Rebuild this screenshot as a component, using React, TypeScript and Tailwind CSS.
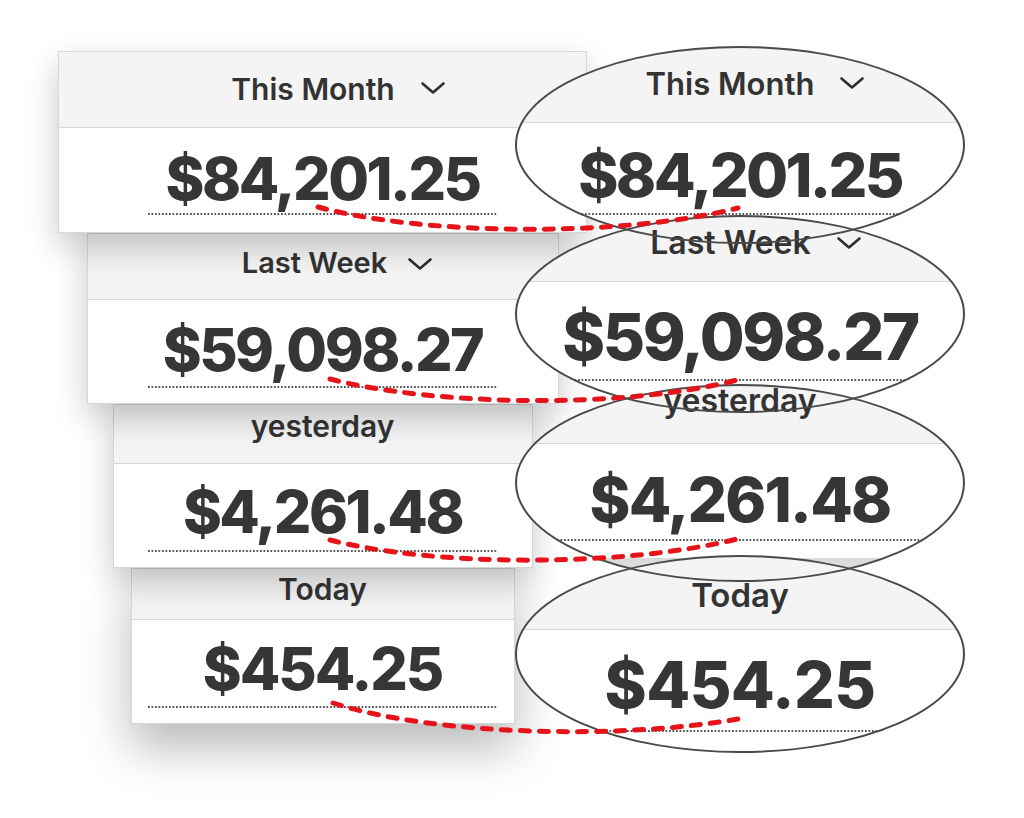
import React from "react";

function Chevron({ className = "" }: { className?: string }) {
  return (
    <svg className={className} width="26" height="14" viewBox="0 0 26 14" fill="none">
      <path d="M2.5 2.5L13 11.5L23.5 2.5" stroke="#2f2f2f" strokeWidth="2.6" strokeLinecap="round" strokeLinejoin="round" />
    </svg>
  );
}

function Dots({ className = "" }: { className?: string }) {
  return (
    <div
      className={`h-[2px] shrink-0 bg-[linear-gradient(90deg,#555_0_1.5px,transparent_1.5px)] bg-size-[3.5px_2px] ${className}`}
    />
  );
}

export default function App() {
  return (
    <div className="relative h-[818px] w-[1024px] overflow-hidden bg-white font-['Inter','Noto_Sans',sans-serif] text-[#333]">
      {/* left stacked cards */}
      <div className="ml-[58px] flex w-[529px] flex-col items-center pt-[51px]">
        {/* This Month */}
        <div className="relative z-40 flex h-[182px] w-[529px] flex-col border border-[#d6d6d6] bg-white shadow-[0_14px_30px_rgba(0,0,0,0.22)]">
          <div className="flex h-[76px] shrink-0 justify-center border-b border-[#d6d6d6] bg-[#f4f4f4] pt-[22px]">
            <div className="ml-[32px] flex items-start gap-[25px]">
              <span className="text-[30px] font-semibold leading-none">This Month</span>
              <Chevron className="mt-[7px]" />
            </div>
          </div>
          <div className="flex flex-col items-center pt-[21px]">
            <span className="text-[59px] font-extrabold leading-none tracking-[-2.5px] text-[#363636]">$84,201.25</span>
            <Dots className="mt-[5px] w-[349px]" />
          </div>
        </div>

        {/* Last Week */}
        <div className="relative z-30 flex h-[171px] w-[472px] flex-col border border-[#d6d6d6] bg-white shadow-[0_14px_30px_rgba(0,0,0,0.22)]">
          <div className="flex h-[66px] shrink-0 justify-center border-b border-[#d6d6d6] bg-[#f4f4f4] pt-[14px]">
            <div className="ml-[30px] flex items-start gap-[20px]">
              <span className="text-[29px] font-semibold leading-none">Last Week</span>
              <Chevron className="mt-[9px]" />
            </div>
          </div>
          <div className="flex flex-col items-center pt-[20px]">
            <span className="text-[59px] font-extrabold leading-none tracking-[-2.5px] text-[#363636]">$59,098.27</span>
            <Dots className="mt-[7px] w-[349px]" />
          </div>
        </div>

        {/* yesterday */}
        <div className="relative z-20 flex h-[164px] w-[420px] flex-col border border-[#d6d6d6] bg-white shadow-[0_14px_30px_rgba(0,0,0,0.22)]">
          <div className="flex h-[59px] shrink-0 justify-center border-b border-[#d6d6d6] bg-[#f4f4f4] pt-[6px]">
            <span className="text-[30px] font-semibold leading-none">yesterday</span>
          </div>
          <div className="flex flex-col items-center pt-[18px]">
            <span className="text-[59px] font-extrabold leading-none tracking-[-2.5px] text-[#363636]">$4,261.48</span>
            <Dots className="mt-[9px] w-[349px]" />
          </div>
        </div>

        {/* Today */}
        <div className="relative z-10 flex h-[156px] w-[384px] flex-col border border-[#d6d6d6] bg-white shadow-[0_24px_45px_rgba(0,0,0,0.28)]">
          <div className="flex h-[51px] shrink-0 justify-center border-b border-[#d6d6d6] bg-[#f4f4f4] pt-[5px]">
            <span className="text-[30px] font-semibold leading-none">Today</span>
          </div>
          <div className="flex flex-col items-center pt-[19px]">
            <span className="text-[59px] font-extrabold leading-none tracking-[-2px] text-[#363636]">$454.25</span>
            <Dots className="mt-[8px] w-[349px]" />
          </div>
        </div>
      </div>

      {/* magnifier lenses */}
      <div className="absolute left-[515px] top-[46px] z-50 flex h-[198px] w-[450px] flex-col overflow-hidden rounded-[50%] bg-white">
        <div className="flex h-[77px] shrink-0 justify-center border-b border-[#d6d6d6] bg-[#f4f4f4] pt-[22px]">
          <div className="ml-[31px] flex items-start gap-[25px]">
            <span className="text-[31px] font-semibold leading-none">This Month</span>
            <Chevron className="mt-[8px]" />
          </div>
        </div>
        <div className="flex flex-col items-center pt-[22px]">
          <span className="text-[61px] font-extrabold leading-none tracking-[-2.7px] text-[#363636]">$84,201.25</span>
          <Dots className="mt-[7px] w-[380px]" />
        </div>
      </div>

      <div className="absolute left-[515px] top-[215px] z-50 flex h-[198px] w-[450px] flex-col overflow-hidden rounded-[50%] bg-white">
        <div className="flex h-[67px] shrink-0 justify-center border-b border-[#d6d6d6] bg-[#f4f4f4] pt-[12px]">
          <div className="ml-[32px] flex items-start gap-[25px]">
            <span className="text-[32px] font-semibold leading-none">Last Week</span>
            <Chevron className="mt-[9px]" />
          </div>
        </div>
        <div className="flex flex-col items-center pt-[22px]">
          <span className="text-[65px] font-extrabold leading-none tracking-[-2.4px] text-[#363636]">$59,098.27</span>
          <Dots className="mt-[10px] w-[380px]" />
        </div>
      </div>

      <div className="absolute left-[515px] top-[384px] z-50 flex h-[198px] w-[450px] flex-col overflow-hidden rounded-[50%] bg-white">
        <div className="flex h-[60px] shrink-0 justify-center border-b border-[#d6d6d6] bg-[#f4f4f4] pt-[1px]">
          <span className="text-[32px] font-semibold leading-none">yesterday</span>
        </div>
        <div className="flex flex-col items-center pt-[25px]">
          <span className="text-[62px] font-extrabold leading-none tracking-[-1.8px] text-[#363636]">$4,261.48</span>
          <Dots className="mt-[8px] w-[380px]" />
          <div className="mt-[17px] h-[40px] w-full bg-[linear-gradient(#d9d9d9,#efefef)]" />
        </div>
      </div>

      <div className="absolute left-[515px] top-[555px] z-50 flex h-[198px] w-[450px] flex-col overflow-hidden rounded-[50%] bg-white">
        <div className="flex h-[75px] shrink-0 justify-center border-b border-[#d6d6d6] bg-[#f4f4f4] pt-[24px]">
          <span className="text-[33px] font-semibold leading-none">Today</span>
        </div>
        <div className="flex flex-col items-center pt-[23px]">
          <span className="text-[64px] font-extrabold leading-none tracking-[-0.6px] text-[#363636]">$454.25</span>
          <Dots className="mt-[13px] w-[380px]" />
        </div>
      </div>

      {/* outlines and connectors */}
      <svg className="pointer-events-none absolute left-0 top-0 z-[60]" width="1024" height="818" viewBox="0 0 1024 818">
        <g fill="none" stroke="#4a4a4a" strokeWidth="2">
          <ellipse cx="740" cy="145" rx="224" ry="98" />
          <ellipse cx="740" cy="314" rx="224" ry="98" />
          <ellipse cx="740" cy="483" rx="224" ry="98" />
          <ellipse cx="740" cy="654" rx="224" ry="98" />
        </g>
        <g fill="none" stroke="#e5141b" strokeWidth="5" strokeLinecap="round" strokeDasharray="9 10">
          <path d="M318 207 C420 235 620 238 738 208" />
          <path d="M330 379 C430 405 620 410 737 380" />
          <path d="M330 540 C430 566 620 568 737 539" />
          <path d="M333 703 C430 735 620 740 738 719" />
        </g>
      </svg>
    </div>
  );
}
